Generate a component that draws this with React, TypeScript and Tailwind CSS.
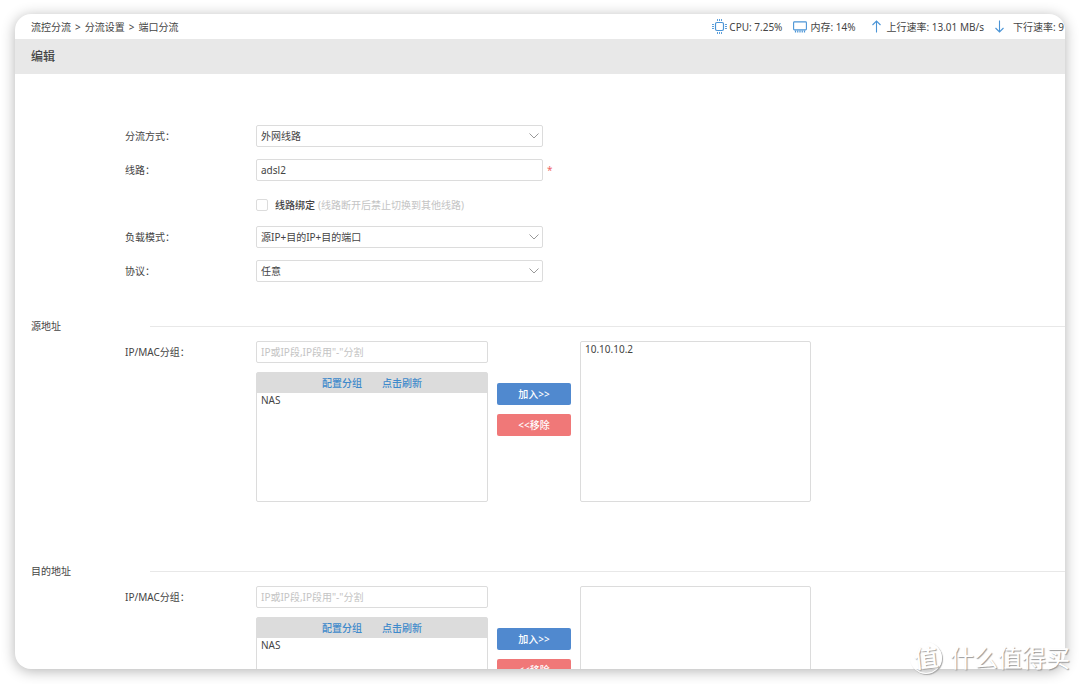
import { ReactNode, useState } from "react";
import { clsx } from "clsx";

const inputClass =
  "h-[22px] rounded-xs border border-[#dcdcdc] bg-white px-1 outline-none placeholder:text-[#c4c4c4]";

const CpuIcon = () => (
  <svg width="15" height="15" viewBox="0 0 15 15" fill="none" stroke="#4a94d6">
    <rect x="3.5" y="3.5" width="8" height="8" rx="1.5" strokeWidth="1.2" />
    <path d="M5.5 0v2M7.5 0v2M9.5 0v2M5.5 13v2M7.5 13v2M9.5 13v2" strokeWidth="0.9" />
    <path d="M0 5.5h2M0 7.5h2M0 9.5h2M13 5.5h2M13 7.5h2M13 9.5h2" strokeWidth="0.9" />
  </svg>
);

const MemoryIcon = () => (
  <svg width="14" height="12" viewBox="0 0 14 12" fill="none" stroke="#4a94d6">
    <rect x="0.6" y="0.9" width="12.8" height="8" rx="0.8" strokeWidth="1.1" />
    <path d="M2.5 9.6v2M4.75 9.6v2M7 9.6v2M9.25 9.6v2M11.5 9.6v2" strokeWidth="1.2" />
  </svg>
);

const ArrowIcon = ({ down = false }: { down?: boolean }) => (
  <svg
    width="9"
    height="13"
    viewBox="0 0 9 13"
    fill="none"
    stroke="#4a94d6"
    strokeWidth="1.1"
    className={clsx(down && "rotate-180")}
  >
    <path d="M4.5 12.5V1M.5 5l4-4 4 4" />
  </svg>
);

interface RowProps {
  label?: string;
  htmlFor?: string;
  children: ReactNode;
}

const Row = ({ label, htmlFor, children }: RowProps) => (
  <div className="flex">
    <div className="w-[131px] shrink-0 leading-[22px]">
      {label && <label htmlFor={htmlFor}>{label}</label>}
    </div>
    {children}
  </div>
);

interface SelectFieldProps {
  id: string;
  options: string[];
}

const SelectField = ({ id, options }: SelectFieldProps) => (
  <div className="relative w-[287px]">
    <select id={id} className={clsx(inputClass, "block w-full appearance-none")}>
      {options.map((option) => (
        <option key={option}>{option}</option>
      ))}
    </select>
    <svg
      width="10"
      height="6"
      viewBox="0 0 10 6"
      fill="none"
      stroke="#999"
      className="pointer-events-none absolute top-2 right-1"
    >
      <path d="M.5 .5 5 5 9.5 .5" />
    </svg>
  </div>
);

interface AddressSectionProps {
  id: string;
  title: string;
  initial: string[];
}

const AddressSection = ({ id, title, initial }: AddressSectionProps) => {
  const [value, setValue] = useState("");
  const [items, setItems] = useState(initial);
  const [selected, setSelected] = useState<string[]>([]);

  const handleAdd = () => {
    if (value && !items.includes(value)) {
      setItems([...items, value]);
      setValue("");
    }
  };

  const handleRemove = () => {
    setItems(items.filter((item) => !selected.includes(item)));
    setSelected([]);
  };

  return (
    <section>
      <div className="flex items-center pl-4">
        <h2 className="w-[119px] leading-[14px]">{title}</h2>
        <div className="h-px flex-1 bg-[#e8e8e8]" />
      </div>
      <div className="mt-2 pl-[110px]">
        <Row label="IP/MAC分组：" htmlFor={`${id}-ip`}>
          <div className="flex h-[161px] w-[232px] flex-col gap-[9px]">
            <input
              id={`${id}-ip`}
              className={inputClass}
              placeholder={'IP或IP段,IP段用"-"分割'}
              value={value}
              onChange={(e) => setValue(e.target.value)}
            />
            <div className="flex flex-1 flex-col rounded-xs border border-[#dcdcdc]">
              <div className="flex h-5 items-center justify-center gap-5 bg-[#dcdcdc] font-medium text-[#3f8acb]">
                <a href="#group">配置分组</a>
                <a href="#refresh">点击刷新</a>
              </div>
              <select
                multiple
                aria-label={`${title}分组`}
                className="flex-1 overflow-hidden px-1 outline-none"
              >
                <option className="leading-3">NAS</option>
              </select>
            </div>
          </div>
          <div className="mx-[9px] flex w-[74px] flex-col gap-[9px] pt-[42px] font-medium text-white">
            <button className="h-[22px] rounded-xs bg-[#5089cf]" onClick={handleAdd}>
              加入&gt;&gt;
            </button>
            <button className="h-[22px] rounded-xs bg-[#f07878]" onClick={handleRemove}>
              &lt;&lt;移除
            </button>
          </div>
          <select
            multiple
            aria-label={title}
            className="h-[161px] w-[231px] overflow-hidden rounded-xs border border-[#dcdcdc] px-1 outline-none"
            value={selected}
            onChange={(e) =>
              setSelected(Array.from(e.target.selectedOptions, (o) => o.value))
            }
          >
            {items.map((item) => (
              <option key={item} className="leading-3">
                {item}
              </option>
            ))}
          </select>
        </Row>
      </div>
    </section>
  );
};

const Watermark = () => (
  <div className="pointer-events-none absolute right-[10px] bottom-[10px] flex items-center gap-2 text-white [text-shadow:1px_1px_1px_#999]">
    <div className="flex size-8 items-center justify-center rounded-full border border-white text-2xl leading-none font-medium shadow-[1px_1px_1px_#aaa]">
      <span className="-rotate-6">值</span>
    </div>
    <div className="text-2xl leading-8">什么值得买</div>
  </div>
);

export default function App() {
  return (
    <div className="relative h-screen overflow-hidden bg-white px-[15px] pt-[14px] pb-[15px] font-['Noto_Sans','Noto_Sans_CJK_SC',sans-serif] text-[10px] leading-[14px] text-[#444]">
      <div className="h-full overflow-hidden rounded-2xl bg-white shadow-[0_2px_14px_rgba(0,0,0,0.3)]">
        <header className="flex h-[25px] items-center justify-between pr-px pl-4 whitespace-nowrap">
          <nav className="flex gap-1">
            <a href="#flow">流控分流</a>
            <span>&gt;</span>
            <a href="#settings">分流设置</a>
            <span>&gt;</span>
            <a href="#port">端口分流</a>
          </nav>
          <div className="flex items-center gap-[11px]">
            <div className="flex items-center gap-0.5">
              <CpuIcon />
              CPU: 7.25%
            </div>
            <div className="mr-1.5 flex items-center gap-[3px]">
              <MemoryIcon />
              内存: 14%
            </div>
            <div className="flex items-center gap-[5px]">
              <ArrowIcon />
              上行速率: 13.01 MB/s
            </div>
            <div className="flex items-center gap-[9px]">
              <ArrowIcon down />
              下行速率: 9
            </div>
          </div>
        </header>
        <h1 className="bg-[#e8e8e8] pl-4 text-xs leading-[35px] font-medium">编辑</h1>

        <form className="pt-[51px]" onSubmit={(e) => e.preventDefault()}>
          <div className="flex flex-col gap-3 pl-[110px]">
            <Row label="分流方式：" htmlFor="mode">
              <SelectField id="mode" options={["外网线路", "下一跳网关"]} />
            </Row>
            <Row label="线路：" htmlFor="line">
              <input id="line" className={clsx(inputClass, "w-[287px]")} defaultValue="adsl2" />
              <span className="pl-1 leading-[22px] text-[#ee6666]">*</span>
            </Row>
            <Row>
              <div className="flex h-[21px] items-center pt-[3px]">
                <input
                  id="bind"
                  type="checkbox"
                  className="size-3 appearance-none rounded-xs border border-[#dcdcdc] checked:bg-[#5089cf]"
                />
                <label htmlFor="bind" className="pl-[7px] font-medium">
                  线路绑定
                </label>
                <span className="pl-[3px] text-[#c4c4c4]">(线路断开后禁止切换到其他线路)</span>
              </div>
            </Row>
            <Row label="负载模式：" htmlFor="balance">
              <SelectField id="balance" options={["源IP+目的IP+目的端口", "源IP+目的IP", "源IP"]} />
            </Row>
            <Row label="协议：" htmlFor="protocol">
              <SelectField id="protocol" options={["任意", "tcp", "udp"]} />
            </Row>
          </div>

          <div className="mt-[37px] flex flex-col gap-[62px]">
            <AddressSection id="src" title="源地址" initial={["10.10.10.2"]} />
            <AddressSection id="dst" title="目的地址" initial={[]} />
          </div>
        </form>
      </div>
      <Watermark />
    </div>
  );
}
